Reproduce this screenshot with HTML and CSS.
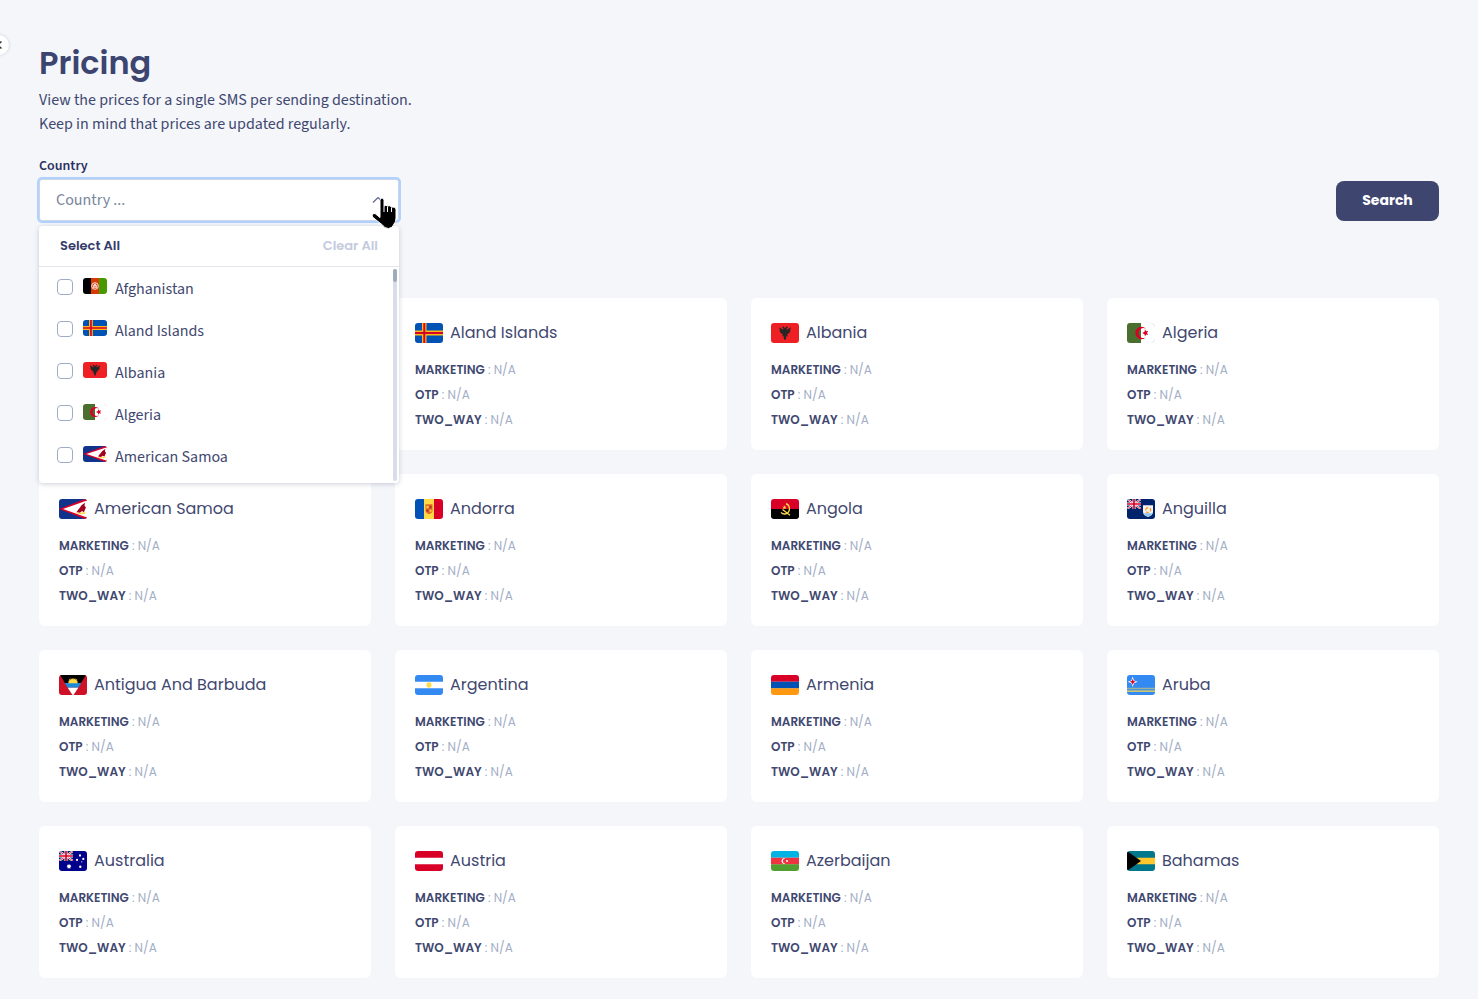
FILE: index.html
```
<!DOCTYPE html>
<html lang="en">
<head>
  <meta charset="UTF-8">
  <meta name="viewport" content="width=device-width, initial-scale=1.0">
  <title>Pricing</title>
  <link rel="stylesheet" href="styles.css">
</head>
<body>
  <svg class="sprite" aria-hidden="true">
    <symbol id="af" viewBox="0 0 28 19" preserveAspectRatio="none">
      <path fill="#000" d="M0 0h9.5v19H0z"/><path fill="#d83a06" d="M9.3 0h9.4v19H9.3z"/><path fill="#479900" d="M18.7 0H28v19h-9.3z"/>
      <circle cx="14" cy="9.5" r="3.9" fill="none" stroke="#fff" stroke-width="1"/>
      <path fill="#fff" d="M12 12V9l2-2.5L16 9v3z"/><path fill="#d83a06" d="M13.4 9h1.2v2.5h-1.2z"/>
    </symbol>
    <symbol id="ax" viewBox="0 0 28 19" preserveAspectRatio="none">
      <path fill="#0052b4" d="M0 0h28v19H0z"/>
      <path fill="#ffb915" d="M7 0h4.5v19H7z"/><path fill="#ffb915" d="M0 7.2h28v4.6H0z"/>
      <path fill="#d80027" d="M8.3 0h2v19h-2z"/><path fill="#d80027" d="M0 8.5h28v2H0z"/>
    </symbol>
    <symbol id="al" viewBox="0 0 28 19" preserveAspectRatio="none">
      <path fill="#ee2024" d="M0 0h28v19H0z"/>
      <path fill="#262626" d="M14 5.2l-1.2-1.9-2 .5 1.2 1 .5 1.5-1.7-.6L8.3 4l.2 2.2.9 1-1.2.3 1.4 1.2-.4.9 1.5.2v1l1.3-.2-1 2.3 1.5-.7.5 3 1 1.3 1-1.3.5-3 1.5.7-1-2.3 1.3.2v-1l1.5-.2-.4-.9 1.4-1.2-1.2-.3.9-1L19.700 4l-2.500 1.700-1.700.6.5-1.500 1.200-1-2-.5z"/>
    </symbol>
    <symbol id="dz" viewBox="0 0 28 19" preserveAspectRatio="none">
      <path fill="#fff" d="M0 0h28v19H0z"/><path fill="#496e2d" d="M0 0h14v19H0z"/>
      <path fill="#d80027" d="M18.800 5.500a6 6 0 1 0 0 8 4.700 4.700 0 1 1 0-8z"/>
      <path fill="#d80027" d="M18 6l1.1 1.900 2.200-.4-1.4 1.900 1.400 1.900-2.200-.4-1.100 1.900-.5-2.200-2.300-1.200 2.300-1.200z"/>
      <path fill="none" stroke="#dfe1e4" stroke-width=".8" d="M24.500.4q3.100 0 3.100 3.100M24.500 18.600q3.100 0 3.100-3.100"/>
    </symbol>
    <symbol id="as" viewBox="0 0 28 19" preserveAspectRatio="none">
      <path fill="#10338c" d="M0 0h28v19H0z"/><path fill="#d80027" d="M28 0v19h-2L0 9.500 26 0z"/>
      <path fill="#fff" d="M28 1.500v16L4 9.500z"/>
      <path fill="#a2001d" d="M26 3.500l-.5 3 1.500 1.500-1 2-1 2.500-2-1-2 1.500-3.500-.5 1.500-2 2-2.500 1.500-2z"/>
      <path fill="#ffda44" d="M17 12.700l4 .7 5-1.200.5 1.500-3 .7-5-.4z"/>
    </symbol>
    <symbol id="ad" viewBox="0 0 28 19" preserveAspectRatio="none">
      <path fill="#0052b4" d="M0 0h9v19H0z"/><path fill="#ffda44" d="M9 0h10v19H9z"/><path fill="#d80027" d="M19 0h9v19h-9z"/>
      <path fill="#e46a2a" d="M10.500 5h7v6q0 2.500-3.500 3.500-3.500-1-3.500-3.500z"/>
      <path fill="#ffda44" d="M11.500 6.700h2v2h-2zM14.700 10.300h1.800v1.700h-1.800z"/><path fill="#b3312b" d="M14.500 6.500h2v2.500h-2zM11.500 10h2v2h-2z"/>
    </symbol>
    <symbol id="ao" viewBox="0 0 28 19" preserveAspectRatio="none">
      <path fill="#d80027" d="M0 0h28v9.500H0z"/><path fill="#000" d="M0 9.500h28V19H0z"/>
      <path fill="none" stroke="#ffda44" stroke-width="1.300" d="M15 4.500a5 5 0 0 1 0 9.500q-3 1-5-1.300M11.500 10l7.500 5.500"/>
      <path fill="#ffda44" d="M13.500 6l.6 1.300 1.400.1-1 1 .3 1.400-1.300-.7-1.300.7.300-1.400-1-1 1.400-.1z"/>
    </symbol>
    <symbol id="jack" viewBox="0 0 14 10" preserveAspectRatio="none">
      <path fill="#00246b" d="M0 0h14v10H0z"/>
      <path stroke="#fff" stroke-width="2" d="M0 0l14 10M14 0L0 10"/><path stroke="#d80027" stroke-width=".8" d="M0 0l14 10M14 0L0 10"/>
      <path stroke="#fff" stroke-width="3" d="M7 0v10M0 5h14"/><path stroke="#d80027" stroke-width="1.700" d="M7 0v10M0 5h14"/>
    </symbol>
    <symbol id="ai" viewBox="0 0 28 19" preserveAspectRatio="none">
      <path fill="#00246b" d="M0 0h28v19H0z"/><use href="#jack" width="14" height="9.500"/>
      <path fill="#f3f3f3" d="M16 6h10v6q0 3.500-5 5-5-1.500-5-5z"/><path fill="#89c7ef" d="M16.500 13.500h9q-1 2-4.500 3.300-3.500-1.300-4.500-3.300z"/>
      <path fill="none" stroke="#ff9811" stroke-width="1.200" d="M18.600 10.800q.4-2.700 2.600-2.600M22.800 8.700q1.500 1.500.4 3.200M21.700 12.600q-1.500.6-2.700-.4"/>
    </symbol>
    <symbol id="ag" viewBox="0 0 28 19" preserveAspectRatio="none">
      <path fill="#ce1126" d="M0 0h28v19H0z"/><path fill="#000" d="M1 0h26l-5.300 8H6.300z"/>
      <path fill="#1c8ad6" d="M5.700 7.500h16.600l-3 4.500H8.700z"/><path fill="#fff" d="M8.700 12h10.600L14.500 19h-1z"/>
      <path fill="#ffda44" d="M9 7.800l1-1.300-1.400-.8 1.800-.3-.6-1.700 1.700.9.300-1.700 1.200 1.300 1-1.700 1 1.700 1.200-1.300.3 1.700 1.700-.9-.6 1.700 1.800.3-1.400.8 1 1.300z"/>
    </symbol>
    <symbol id="ar" viewBox="0 0 28 19" preserveAspectRatio="none">
      <path fill="#338af3" d="M0 0h28v19H0z"/><path fill="#fff" d="M0 6.300h28v6.400H0z"/><circle cx="14" cy="9.500" r="2.500" fill="#ffda44"/>
    </symbol>
    <symbol id="am" viewBox="0 0 28 19" preserveAspectRatio="none">
      <path fill="#d80027" d="M0 0h28v6.500H0z"/><path fill="#0052b4" d="M0 6.300h28v6.500H0z"/><path fill="#ff9811" d="M0 12.700h28V19H0z"/>
    </symbol>
    <symbol id="aw" viewBox="0 0 28 19" preserveAspectRatio="none">
      <path fill="#338af3" d="M0 0h28v19H0z"/><path fill="#9bb59b" d="M0 12h28v1.600H0z"/><path fill="#ffda44" d="M0 14.700h28V16H0z"/>
      <path fill="#fff" d="M5.700 1.500l1.300 3.700 3.700 1.300L7 7.800l-1.300 3.700-1.300-3.700L.7 6.500l3.700-1.300z"/>
      <path fill="#d80027" d="M5.700 3.500l.9 2.100 2.100.9-2.100.9-.9 2.100-.9-2.100-2.100-.9 2.100-.9z"/>
    </symbol>
    <symbol id="au" viewBox="0 0 28 19" preserveAspectRatio="none">
      <path fill="#00008b" d="M0 0h28v19H0z"/><use href="#jack" width="14" height="9.500"/>
      <path fill="#fff" d="M10 12l.6 1.300 1.500-.3-.7 1.300 1.200.9-1.400.3v1.500l-1.200-1-1.200 1v-1.500l-1.400-.3 1.200-.9-.7-1.300 1.500.3z"/>
      <g fill="#fff"><circle cx="21" cy="4.300" r="1.100"/><circle cx="18" cy="8.500" r="1.100"/><circle cx="24.300" cy="7.500" r="1.100"/><circle cx="21.300" cy="15" r="1.200"/><circle cx="22.800" cy="10.300" r=".6"/></g>
    </symbol>
    <symbol id="at" viewBox="0 0 28 19" preserveAspectRatio="none">
      <path fill="#d80027" d="M0 0h28v19H0z"/><path fill="#fff" d="M0 6.300h28v6.400H0z"/>
    </symbol>
    <symbol id="az" viewBox="0 0 28 19" preserveAspectRatio="none">
      <path fill="#00b3e2" d="M0 0h28v6.500H0z"/><path fill="#ef3340" d="M0 6.300h28v6.500H0z"/><path fill="#509e2f" d="M0 12.700h28V19H0z"/>
      <path fill="#fff" d="M14.800 7.300a2.700 2.700 0 1 0 0 4.400 2.300 2.300 0 1 1 0-4.400z"/><circle cx="16" cy="9.500" r="1" fill="#fff"/>
    </symbol>
    <symbol id="bs" viewBox="0 0 28 19" preserveAspectRatio="none">
      <path fill="#00778b" d="M0 0h28v19H0z"/><path fill="#ffc72c" d="M0 6.300h28v6.400H0z"/><path fill="#000" d="M0 0l14 9.500L0 19z"/>
    </symbol>
  </svg>

  <button class="sidebar-toggle" type="button" aria-label="Toggle sidebar">
    <svg width="20" height="20" viewBox="0 0 20 20"><path d="M12.500 6.500L8.500 10l4 3.500"/></svg>
  </button>

  <main class="container">
    <h1>Pricing</h1>
    <p class="intro">View the prices for a single SMS per sending destination.<br>Keep in mind that prices are updated regularly.</p>

    <form class="filters">
      <div class="field">
        <label for="country">Country</label>
        <div class="select">
          <input id="country" type="text" placeholder="Country ..." role="combobox" aria-expanded="true" aria-controls="country-menu">
          <svg class="chevron" width="12" height="8" viewBox="0 0 12 8"><path d="M1 6.500L6 1.500l5 5"/></svg>
          <svg class="pointer" width="26" height="33" viewBox="0 0 26 33">
            <path d="M9 3.500q0-2.500 2-2.500t2 2.500V9q2-1.500 3.500 0 2.500-1 4 1 4-.500 4.500 2v9q0 4-2 6-1 4-5.500 4.500-4 0-6-3.500L7 24.500 1.500 20q-1-3.500 2.500-3.500l5 4z"/>
            <path d="M13 9v6M16.500 9.500V15M20.500 10.500V15"/>
          </svg>
          <div class="menu" id="country-menu">
            <div class="menu-actions">
              <button type="button">Select All</button>
              <button type="button" class="muted">Clear All</button>
            </div>
            <div class="options">
              <label class="option"><input type="checkbox"><svg class="flag"><use href="#af"/></svg><span>Afghanistan</span></label>
              <label class="option"><input type="checkbox"><svg class="flag"><use href="#ax"/></svg><span>Aland Islands</span></label>
              <label class="option"><input type="checkbox"><svg class="flag"><use href="#al"/></svg><span>Albania</span></label>
              <label class="option"><input type="checkbox"><svg class="flag"><use href="#dz"/></svg><span>Algeria</span></label>
              <label class="option"><input type="checkbox"><svg class="flag"><use href="#as"/></svg><span>American Samoa</span></label>
            </div>
            <div class="scrollbar"><div class="thumb"></div></div>
          </div>
        </div>
      </div>
      <button class="search" type="submit">Search</button>
    </form>

    <section class="cards">
      <article class="card">
        <h2><svg class="flag"><use href="#af"/></svg>Afghanistan</h2>
        <p><b>MARKETING</b> : N/A</p>
        <p><b>OTP</b> : N/A</p>
        <p><b>TWO_WAY</b> : N/A</p>
      </article>
      <article class="card">
        <h2><svg class="flag"><use href="#ax"/></svg>Aland Islands</h2>
        <p><b>MARKETING</b> : N/A</p>
        <p><b>OTP</b> : N/A</p>
        <p><b>TWO_WAY</b> : N/A</p>
      </article>
      <article class="card">
        <h2><svg class="flag"><use href="#al"/></svg>Albania</h2>
        <p><b>MARKETING</b> : N/A</p>
        <p><b>OTP</b> : N/A</p>
        <p><b>TWO_WAY</b> : N/A</p>
      </article>
      <article class="card">
        <h2><svg class="flag"><use href="#dz"/></svg>Algeria</h2>
        <p><b>MARKETING</b> : N/A</p>
        <p><b>OTP</b> : N/A</p>
        <p><b>TWO_WAY</b> : N/A</p>
      </article>
      <article class="card">
        <h2><svg class="flag"><use href="#as"/></svg>American Samoa</h2>
        <p><b>MARKETING</b> : N/A</p>
        <p><b>OTP</b> : N/A</p>
        <p><b>TWO_WAY</b> : N/A</p>
      </article>
      <article class="card">
        <h2><svg class="flag"><use href="#ad"/></svg>Andorra</h2>
        <p><b>MARKETING</b> : N/A</p>
        <p><b>OTP</b> : N/A</p>
        <p><b>TWO_WAY</b> : N/A</p>
      </article>
      <article class="card">
        <h2><svg class="flag"><use href="#ao"/></svg>Angola</h2>
        <p><b>MARKETING</b> : N/A</p>
        <p><b>OTP</b> : N/A</p>
        <p><b>TWO_WAY</b> : N/A</p>
      </article>
      <article class="card">
        <h2><svg class="flag"><use href="#ai"/></svg>Anguilla</h2>
        <p><b>MARKETING</b> : N/A</p>
        <p><b>OTP</b> : N/A</p>
        <p><b>TWO_WAY</b> : N/A</p>
      </article>
      <article class="card">
        <h2><svg class="flag"><use href="#ag"/></svg>Antigua And Barbuda</h2>
        <p><b>MARKETING</b> : N/A</p>
        <p><b>OTP</b> : N/A</p>
        <p><b>TWO_WAY</b> : N/A</p>
      </article>
      <article class="card">
        <h2><svg class="flag"><use href="#ar"/></svg>Argentina</h2>
        <p><b>MARKETING</b> : N/A</p>
        <p><b>OTP</b> : N/A</p>
        <p><b>TWO_WAY</b> : N/A</p>
      </article>
      <article class="card">
        <h2><svg class="flag"><use href="#am"/></svg>Armenia</h2>
        <p><b>MARKETING</b> : N/A</p>
        <p><b>OTP</b> : N/A</p>
        <p><b>TWO_WAY</b> : N/A</p>
      </article>
      <article class="card">
        <h2><svg class="flag"><use href="#aw"/></svg>Aruba</h2>
        <p><b>MARKETING</b> : N/A</p>
        <p><b>OTP</b> : N/A</p>
        <p><b>TWO_WAY</b> : N/A</p>
      </article>
      <article class="card">
        <h2><svg class="flag"><use href="#au"/></svg>Australia</h2>
        <p><b>MARKETING</b> : N/A</p>
        <p><b>OTP</b> : N/A</p>
        <p><b>TWO_WAY</b> : N/A</p>
      </article>
      <article class="card">
        <h2><svg class="flag"><use href="#at"/></svg>Austria</h2>
        <p><b>MARKETING</b> : N/A</p>
        <p><b>OTP</b> : N/A</p>
        <p><b>TWO_WAY</b> : N/A</p>
      </article>
      <article class="card">
        <h2><svg class="flag"><use href="#az"/></svg>Azerbaijan</h2>
        <p><b>MARKETING</b> : N/A</p>
        <p><b>OTP</b> : N/A</p>
        <p><b>TWO_WAY</b> : N/A</p>
      </article>
      <article class="card">
        <h2><svg class="flag"><use href="#bs"/></svg>Bahamas</h2>
        <p><b>MARKETING</b> : N/A</p>
        <p><b>OTP</b> : N/A</p>
        <p><b>TWO_WAY</b> : N/A</p>
      </article>
    </section>
  </main>
</body>
</html>
```

FILE: styles.css
```
* {
  box-sizing: border-box;
}
body {
  margin: 0;
  background: #f4f6fa;
  color: #3f4870;
  font-family: Poppins, Inter, sans-serif;
}
button, input {
  font-family: inherit;
}
h1, h2, p {
  margin: 0;
}
.sprite {
  position: absolute;
  width: 0;
  height: 0;
}
.sidebar-toggle {
  position: absolute;
  top: 35px;
  left: -11px;
  width: 20px;
  height: 20px;
  padding: 0;
  border: 0;
  border-radius: 50%;
  background: #fff;
  box-shadow: 0 0 3px rgba(60, 68, 112, 0.25);
}
.sidebar-toggle svg {
  display: block;
  fill: none;
  stroke: #333;
  stroke-width: 1.5;
}
.container {
  padding: 39px 39px 22px;
}
h1 {
  margin-bottom: 1px;
  font-size: 32px;
  line-height: 48px;
  font-weight: 600;
  color: #3c4470;
}
.intro, .field, .option {
  font-family: "Source Sans 3", "Source Sans Pro", "Noto Sans CJK SC", sans-serif;
}
.intro {
  font-size: 16px;
  line-height: 24px;
}
.filters {
  display: flex;
  justify-content: space-between;
  align-items: flex-end;
  margin: 20px 0 77px;
}
.field {
  width: 360px;
}
.field > label {
  display: block;
  margin-bottom: 3px;
  font-size: 14px;
  line-height: 20px;
  font-weight: 600;
  color: #2b3060;
}
.select {
  position: relative;
}
.select > input {
  display: block;
  width: 100%;
  height: 42px;
  padding: 0 40px 0 16px;
  border: 1px solid #cbd5e6;
  border-radius: 3px;
  outline: 0;
  background: #fff;
  box-shadow: 0 0 0 2px #b0d2ff;
  color: #3f4870;
  font-size: 16px;
}
.select > input::placeholder {
  color: #78859b;
}
.chevron {
  position: absolute;
  top: 17px;
  right: 15px;
  fill: none;
  stroke: #5d6590;
  stroke-width: 1.2;
}
.pointer {
  position: absolute;
  top: 18px;
  right: 2px;
  z-index: 3;
  fill: #000;
  stroke: #fff;
  stroke-width: 1;
}
.menu {
  position: absolute;
  top: 47px;
  left: 0;
  z-index: 2;
  width: 100%;
  border-radius: 4px;
  background: #fff;
  box-shadow: 0 1px 5px rgba(60, 68, 112, 0.25);
}
.menu-actions {
  display: flex;
  justify-content: space-between;
  padding: 0 21px;
  border-bottom: 1px solid #e3e5ea;
}
.menu-actions button {
  height: 40px;
  padding: 0;
  border: 0;
  background: none;
  font-family: Poppins, Inter, sans-serif;
  font-size: 13px;
  font-weight: 600;
  color: #343b69;
}
.menu-actions .muted {
  color: #c5cade;
}
.options {
  padding-bottom: 6px;
}
.option {
  display: flex;
  align-items: center;
  height: 42px;
  padding: 0 18px 2px;
  font-size: 16px;
}
.option span {
  padding-top: 4px;
}
.option input {
  appearance: none;
  width: 16px;
  height: 16px;
  margin: 0 10px 0 0;
  border: 1px solid #a0abc8;
  border-radius: 4px;
  background: #fff;
}
.option .flag {
  width: 24px;
  height: 16px;
  margin: 0 8px 2px 0;
}
.flag {
  flex: none;
  width: 28px;
  height: 20px;
  border-radius: 3px;
  overflow: hidden;
}
.scrollbar {
  position: absolute;
  top: 43px;
  right: 2px;
  bottom: 2px;
  width: 4px;
  border-radius: 2px;
  background: #d8dde7;
}
.thumb {
  height: 13px;
  border-radius: 2px;
  background: #a0aabd;
}
.search {
  height: 40px;
  min-width: 103px;
  padding: 0 24px 2px;
  border: 0;
  border-radius: 8px;
  background: #3e466f;
  color: #fff;
  font-size: 14px;
  font-weight: 700;
}
.cards {
  display: grid;
  grid-template-columns: repeat(4, 1fr);
  gap: 24px;
}
.card {
  padding: 21px 20px 18px;
  border-radius: 6px;
  background: #fff;
}
.card h2 {
  display: flex;
  align-items: center;
  gap: 7px;
  margin-bottom: 10px;
  font-size: 16px;
  line-height: 28px;
  font-weight: 400;
}
.card p {
  font-size: 12px;
  line-height: 25px;
  color: #a3aec6;
}
.card b {
  font-weight: 600;
  color: #3f4870;
}
```
